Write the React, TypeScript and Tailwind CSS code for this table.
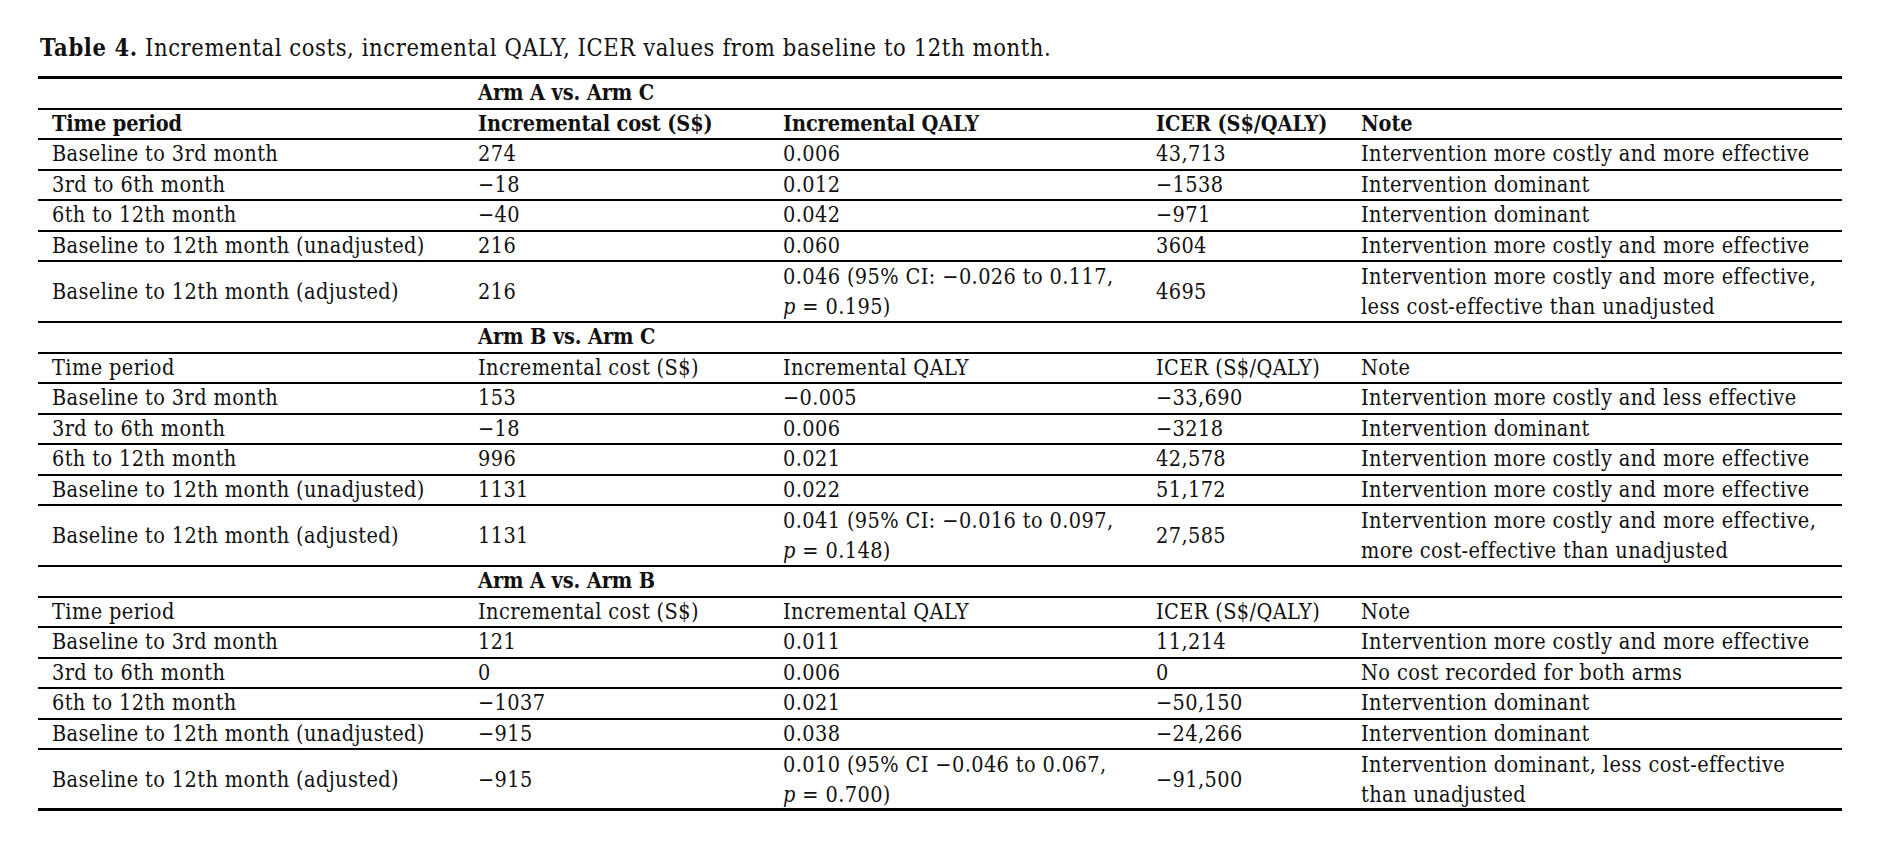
type Row = { period: string; cost: string; qaly: React.ReactNode; icer: string; note: React.ReactNode; tall?: boolean };

type Section = { title: string; boldHead?: boolean; rows: Row[] };

const pval = (ci: string, p: string) => (
  <>
    {ci}
    <br />
    <i>p</i> = {p})
  </>
);

const sections: Section[] = [
  {
    title: "Arm A vs. Arm C",
    boldHead: true,
    rows: [
      { period: "Baseline to 3rd month", cost: "274", qaly: "0.006", icer: "43,713", note: "Intervention more costly and more effective" },
      { period: "3rd to 6th month", cost: "\u221218", qaly: "0.012", icer: "\u22121538", note: "Intervention dominant" },
      { period: "6th to 12th month", cost: "\u221240", qaly: "0.042", icer: "\u2212971", note: "Intervention dominant" },
      { period: "Baseline to 12th month (unadjusted)", cost: "216", qaly: "0.060", icer: "3604", note: "Intervention more costly and more effective" },
      {
        period: "Baseline to 12th month (adjusted)",
        cost: "216",
        qaly: pval("0.046 (95% CI: \u22120.026 to 0.117,", "0.195"),
        icer: "4695",
        note: <>Intervention more costly and more effective,<br />less cost-effective than unadjusted</>,
        tall: true,
      },
    ],
  },
  {
    title: "Arm B vs. Arm C",
    rows: [
      { period: "Baseline to 3rd month", cost: "153", qaly: "\u22120.005", icer: "\u221233,690", note: "Intervention more costly and less effective" },
      { period: "3rd to 6th month", cost: "\u221218", qaly: "0.006", icer: "\u22123218", note: "Intervention dominant" },
      { period: "6th to 12th month", cost: "996", qaly: "0.021", icer: "42,578", note: "Intervention more costly and more effective" },
      { period: "Baseline to 12th month (unadjusted)", cost: "1131", qaly: "0.022", icer: "51,172", note: "Intervention more costly and more effective" },
      {
        period: "Baseline to 12th month (adjusted)",
        cost: "1131",
        qaly: pval("0.041 (95% CI: \u22120.016 to 0.097,", "0.148"),
        icer: "27,585",
        note: <>Intervention more costly and more effective,<br />more cost-effective than unadjusted</>,
        tall: true,
      },
    ],
  },
  {
    title: "Arm A vs. Arm B",
    rows: [
      { period: "Baseline to 3rd month", cost: "121", qaly: "0.011", icer: "11,214", note: "Intervention more costly and more effective" },
      { period: "3rd to 6th month", cost: "0", qaly: "0.006", icer: "0", note: "No cost recorded for both arms" },
      { period: "6th to 12th month", cost: "\u22121037", qaly: "0.021", icer: "\u221250,150", note: "Intervention dominant" },
      { period: "Baseline to 12th month (unadjusted)", cost: "\u2212915", qaly: "0.038", icer: "\u221224,266", note: "Intervention dominant" },
      {
        period: "Baseline to 12th month (adjusted)",
        cost: "\u2212915",
        qaly: pval("0.010 (95% CI \u22120.046 to 0.067,", "0.700"),
        icer: "\u221291,500",
        note: <>Intervention dominant, less cost-effective<br />than unadjusted</>,
        tall: true,
      },
    ],
  },
];

const cols = "grid grid-cols-[426px_305px_373px_205px_1fr]";

const Line = ({ cells, tall, bold, last }: { cells: React.ReactNode[]; tall?: boolean; bold?: boolean; last?: boolean }) => (
  <div
    className={`${cols} items-center ${tall ? "h-[61px] leading-[30px]" : "h-[30.5px] leading-[28px]"} ${last ? "border-b-[3px]" : "border-b-2"} border-black ${bold ? "font-bold tracking-[-0.1px]" : ""}`}
  >
    {cells.map((c, i) => (
      <div key={i} className="pl-[14px] whitespace-nowrap">{c}</div>
    ))}
  </div>
);

export default function App() {
  return (
    <div
      className="bg-white text-[#111] pl-[38px] pt-[33px] w-[1882px] h-[857px] text-[21.5px] tracking-[0.4px] [font-stretch:condensed]"
      style={{ fontFamily: '"DejaVu Serif Condensed", "DejaVu Serif", "Liberation Serif", serif' }}
    >
      <p className="text-[23.5px] tracking-[0.6px] leading-[30px] pl-[2px]">
        <b>Table 4.</b> Incremental costs, incremental QALY, ICER values from baseline to 12th month.
      </p>
      <div className="w-[1804px] mt-[13px] border-t-[3px] border-black">
        {sections.map((s, si) => (
          <div key={s.title}>
            <Line bold cells={["", s.title, "", "", ""]} />
            <Line bold={s.boldHead} cells={["Time period", "Incremental cost (S$)", "Incremental QALY", "ICER (S$/QALY)", "Note"]} />
            {s.rows.map((r, ri) => (
              <Line
                key={ri}
                tall={r.tall}
                last={si === sections.length - 1 && ri === s.rows.length - 1}
                cells={[r.period, r.cost, r.qaly, r.icer, r.note]}
              />
            ))}
          </div>
        ))}
      </div>
    </div>
  );
}
